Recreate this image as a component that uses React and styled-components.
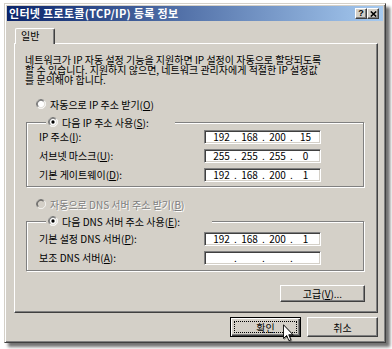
import React from 'react';
import styled, { createGlobalStyle } from 'styled-components';

const GlobalStyle = createGlobalStyle`
  html, body { margin: 0; padding: 0; background: #fff; }
  body {
    font-family: "Noto Sans CJK KR", "Noto Sans", sans-serif;
    font-size: 10px;
    color: #000;
  }
  #root { width: 392px; height: 349px; overflow: hidden; }
`;

const FACE = '#d4d0c8';

const Page = styled.div`
  width: 392px;
  height: 349px;
  box-sizing: border-box;
  padding: 3px 0 0 4px;
`;

const Window = styled.div`
  width: 382px;
  height: 340px;
  box-sizing: border-box;
  background: ${FACE};
  border: 1px solid;
  border-color: ${FACE} #404040 #404040 ${FACE};
  box-shadow: inset 1px 1px #fff, inset -1px -1px #808080, 4px 4px 3px rgba(0, 0, 0, 0.55);
  padding: 2px;
  display: flex;
  flex-direction: column;
`;

const TitleBar = styled.div`
  flex: none;
  height: 15px;
  background: linear-gradient(to right, #0a246a, #a6caf0);
  display: flex;
  align-items: center;
  justify-content: space-between;
  padding: 0 4px 0 2px;
`;

const TitleText = styled.span`
  color: #fff;
  font-weight: bold;
  font-size: 11px;
  letter-spacing: 0.3px;
  line-height: 15px;
  white-space: nowrap;
`;

const CaptionButtons = styled.div`
  display: flex;
`;

const CaptionButton = styled.div`
  width: 12px;
  height: 11px;
  box-sizing: border-box;
  background: ${FACE};
  border: 1px solid;
  border-color: #fff #404040 #404040 #fff;
  box-shadow: inset -1px -1px #808080;
  display: flex;
  align-items: center;
  justify-content: center;
  font-family: "Liberation Sans", sans-serif;
  font-weight: bold;
  font-size: 9px;
  line-height: 9px;
`;

const Client = styled.div`
  flex: 1;
  display: flex;
  flex-direction: column;
  padding: 0 5px 0 7px;
`;

const TabStrip = styled.div`
  margin-top: 7px;
  margin-bottom: -1px;
  height: 16px;
  display: flex;
  padding-left: 1px;
  position: relative;
  z-index: 1;
`;

const Tab = styled.div`
  width: 40px;
  height: 16px;
  box-sizing: border-box;
  background: ${FACE};
  border-top: 1px solid #fff;
  border-left: 1px solid #fff;
  border-right: 1px solid #404040;
  box-shadow: inset -1px 0 #808080;
  border-radius: 2px 2px 0 0;
  padding-left: 5px;
  line-height: 14px;
`;

const Panel = styled.div`
  width: 364px;
  height: 270px;
  box-sizing: border-box;
  border: 1px solid;
  border-color: #fff #404040 #404040 #fff;
  box-shadow: inset -1px -1px #808080;
  display: flex;
  flex-direction: column;
`;

const Description = styled.p`
  margin: 11px 0 0 10px;
  line-height: 10px;
  white-space: nowrap;
`;

const RadioRow = styled.div`
  margin: ${p => p.$top}px 0 0 21px;
  height: 12px;
  display: flex;
  align-items: center;
  gap: 4px;
  color: ${p => (p.$disabled ? '#808080' : '#000')};
  text-shadow: ${p => (p.$disabled ? '1px 1px #fff' : 'none')};
  white-space: nowrap;
`;

const Group = styled.div`
  margin: 11px 13px 0 11px;
  border: 1px solid #808080;
  box-shadow: inset 1px 1px #fff, 1px 1px #fff;
  padding: 0 0 ${p => p.$bottom}px 12px;
  display: flex;
  flex-direction: column;
`;

const Legend = styled.div`
  margin: -7px 0 0 7px;
  width: ${p => p.$w}px;
  height: 12px;
  box-sizing: border-box;
  padding-left: 2px;
  background: ${FACE};
  display: flex;
  align-items: center;
  gap: 4px;
  white-space: nowrap;
`;

const FieldGrid = styled.div`
  margin-top: ${p => p.$top}px;
  display: grid;
  grid-template-columns: 165px 117px;
  row-gap: 5px;
  align-items: center;
`;

const Label = styled.span`
  white-space: nowrap;
  line-height: 14px;
`;

const IpField = styled.div`
  width: 117px;
  height: 14px;
  box-sizing: border-box;
  background: #fff;
  border: 1px solid;
  border-color: #808080 #fff #fff #808080;
  box-shadow: inset 1px 1px #404040, inset -1px -1px ${FACE};
  display: flex;
  align-items: center;
  padding-left: 4px;
`;

const Octet = styled.span`
  width: 25px;
  text-align: center;
  line-height: 12px;
`;

const Dot = styled.span`
  width: 3px;
  text-align: center;
  line-height: 12px;
`;

const PushButton = styled.div`
  position: relative;
  width: ${p => p.$w}px;
  height: ${p => p.$h}px;
  box-sizing: border-box;
  background: ${FACE};
  border: 1px solid;
  border-color: ${p => (p.$default ? '#000' : '#fff #404040 #404040 #fff')};
  box-shadow: ${p =>
    p.$default
      ? 'inset 1px 1px #fff, inset -1px -1px #404040, inset -2px -2px #808080'
      : 'inset -1px -1px #808080'};
  display: flex;
  align-items: center;
  justify-content: center;
  white-space: nowrap;
`;

const AdvancedWrap = styled.div`
  margin: 14px 12px 0 auto;
`;

const FocusRect = styled.span`
  position: absolute;
  inset: 3px;
  border: 1px dotted #000;
`;

const DialogButtons = styled.div`
  margin-top: 4px;
  width: 364px;
  display: flex;
  justify-content: flex-end;
  gap: 6px;
`;

const Cursor = styled.svg`
  position: absolute;
  left: 52px;
  top: 6px;
  filter: drop-shadow(1px 1px 0.6px rgba(0, 0, 0, 0.35));
`;

const U = styled.span`
  text-decoration: underline;
`;

const RadioSvg = styled.svg`
  flex: none;
  display: block;
`;

const Radio = ({ checked, disabled }) => (
  <RadioSvg width="10" height="10" viewBox="0 0 12 12">
    <circle cx="6" cy="6" r="5.5" fill={disabled ? FACE : '#fff'} />
    <path d="M2.1 9.9 A5.5 5.5 0 0 1 9.9 2.1" stroke="#808080" fill="none" />
    <path d="M9.9 2.1 A5.5 5.5 0 0 1 2.1 9.9" stroke="#fff" fill="none" />
    <path d="M2.8 9.2 A4.5 4.5 0 0 1 9.2 2.8" stroke="#404040" fill="none" />
    <path d="M9.2 2.8 A4.5 4.5 0 0 1 2.8 9.2" stroke={FACE} fill="none" />
    {checked && <circle cx="6" cy="6" r="2" fill="#000" />}
  </RadioSvg>
);

const Ip = ({ parts }) => (
  <IpField>
    <Octet>{parts[0]}</Octet>
    <Dot>.</Dot>
    <Octet>{parts[1]}</Octet>
    <Dot>.</Dot>
    <Octet>{parts[2]}</Octet>
    <Dot>.</Dot>
    <Octet>{parts[3]}</Octet>
  </IpField>
);

export default function App() {
  return (
    <>
      <GlobalStyle />
      <Page>
        <Window>
          <TitleBar>
            <TitleText>인터넷 프로토콜(TCP/IP) 등록 정보</TitleText>
            <CaptionButtons>
              <CaptionButton>?</CaptionButton>
              <CaptionButton>
                <svg width="7" height="6" viewBox="0 0 7 6">
                  <path d="M0.8 0.5 L6.2 5.5 M6.2 0.5 L0.8 5.5" stroke="#000" strokeWidth="1.6" />
                </svg>
              </CaptionButton>
            </CaptionButtons>
          </TitleBar>
          <Client>
            <TabStrip>
              <Tab>일반</Tab>
            </TabStrip>
            <Panel>
              <Description>
                네트워크가 IP 자동 설정 기능을 지원하면 IP 설정이 자동으로 할당되도록
                <br />
                할 수 있습니다. 지원하지 않으면, 네트워크 관리자에게 적절한 IP 설정값
                <br />
                를 문의해야 합니다.
              </Description>

              <RadioRow $top={13}>
                <Radio />
                <span>자동으로 IP 주소 받기(<U>O</U>)</span>
              </RadioRow>

              <Group $bottom={4} style={{ marginTop: 12 }}>
                <Legend $w={129}>
                  <Radio checked />
                  <span>다음 IP 주소 사용(<U>S</U>):</span>
                </Legend>
                <FieldGrid $top={2}>
                  <Label>IP 주소(<U>I</U>):</Label>
                  <Ip parts={['192', '168', '200', '15']} />
                  <Label>서브넷 마스크(<U>U</U>):</Label>
                  <Ip parts={['255', '255', '255', '0']} />
                  <Label>기본 게이트웨이(<U>D</U>):</Label>
                  <Ip parts={['192', '168', '200', '1']} />
                </FieldGrid>
              </Group>

              <RadioRow $top={11} $disabled>
                <Radio disabled />
                <span>자동으로 DNS 서버 주소 받기(<U>B</U>)</span>
              </RadioRow>

              <Group $bottom={5}>
                <Legend $w={166}>
                  <Radio checked />
                  <span>다음 DNS 서버 주소 사용(<U>E</U>):</span>
                </Legend>
                <FieldGrid $top={5}>
                  <Label>기본 설정 DNS 서버(<U>P</U>):</Label>
                  <Ip parts={['192', '168', '200', '1']} />
                  <Label>보조 DNS 서버(<U>A</U>):</Label>
                  <Ip parts={['', '', '', '']} />
                </FieldGrid>
              </Group>

              <AdvancedWrap>
                <PushButton $w={85} $h={17}>
                  고급(<U>V</U>)...
                </PushButton>
              </AdvancedWrap>
            </Panel>

            <DialogButtons>
              <PushButton $w={71} $h={20} $default>
                <FocusRect />
                확인
                <Cursor width="11" height="18" viewBox="0 0 12 19">
                  <path
                    d="M0.5 0.5 L0.5 15.5 L4 12.2 L6.4 17.8 L8.6 16.9 L6.3 11.4 L10.8 11.4 Z"
                    fill="#fff"
                    stroke="#000"
                    strokeWidth="1"
                    strokeLinejoin="miter"
                  />
                </Cursor>
              </PushButton>
              <PushButton $w={71} $h={20}>
                취소
              </PushButton>
            </DialogButtons>
          </Client>
        </Window>
      </Page>
    </>
  );
}
